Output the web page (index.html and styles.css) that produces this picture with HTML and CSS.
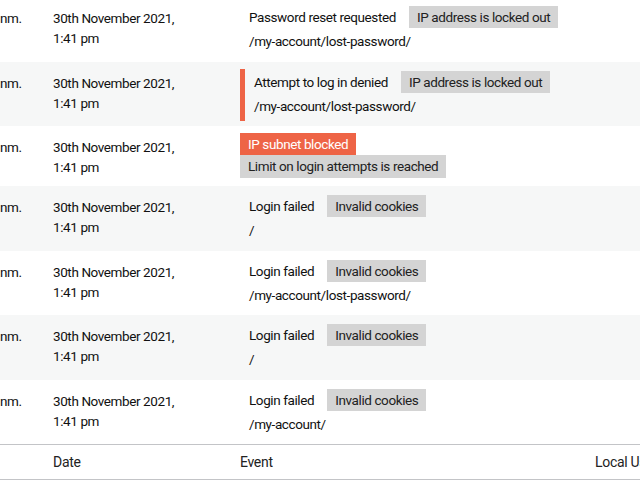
FILE: index.html
```html
<!DOCTYPE html>
<html>
<head>
<meta charset="utf-8">
<link rel="stylesheet" href="styles.css">
</head>
<body>
<div class="wrap">
<table class="log">
  <colgroup>
    <col class="c-user"><col class="c-date"><col class="c-event"><col class="c-local">
  </colgroup>
  <tbody>
    <tr>
      <td class="user">nm.</td>
      <td class="date">30th November 2021,<br>1:41 pm</td>
      <td class="event"><div class="ev"><div class="ev-line"><span class="label">Password reset requested</span><span class="tag">IP address is locked out</span></div><div class="path">/my-account/lost-password/</div></div></td>
      <td></td>
    </tr>
    <tr class="alt">
      <td class="user">nm.</td>
      <td class="date">30th November 2021,<br>1:41 pm</td>
      <td class="event"><div class="ev ev-alert"><div class="ev-line"><span class="label">Attempt to log in denied</span><span class="tag">IP address is locked out</span></div><div class="path">/my-account/lost-password/</div></div></td>
      <td></td>
    </tr>
    <tr>
      <td class="user">nm.</td>
      <td class="date">30th November 2021,<br>1:41 pm</td>
      <td class="event"><div class="tags"><span class="tag tag-red">IP subnet blocked</span><span class="tag">Limit on login attempts is reached</span></div></td>
      <td></td>
    </tr>
    <tr class="alt">
      <td class="user">nm.</td>
      <td class="date">30th November 2021,<br>1:41 pm</td>
      <td class="event"><div class="ev"><div class="ev-line"><span class="label">Login failed</span><span class="tag">Invalid cookies</span></div><div class="path">/</div></div></td>
      <td></td>
    </tr>
    <tr>
      <td class="user">nm.</td>
      <td class="date">30th November 2021,<br>1:41 pm</td>
      <td class="event"><div class="ev"><div class="ev-line"><span class="label">Login failed</span><span class="tag">Invalid cookies</span></div><div class="path">/my-account/lost-password/</div></div></td>
      <td></td>
    </tr>
    <tr class="alt">
      <td class="user">nm.</td>
      <td class="date">30th November 2021,<br>1:41 pm</td>
      <td class="event"><div class="ev"><div class="ev-line"><span class="label">Login failed</span><span class="tag">Invalid cookies</span></div><div class="path">/</div></div></td>
      <td></td>
    </tr>
    <tr>
      <td class="user">nm.</td>
      <td class="date">30th November 2021,<br>1:41 pm</td>
      <td class="event"><div class="ev"><div class="ev-line"><span class="label">Login failed</span><span class="tag">Invalid cookies</span></div><div class="path">/my-account/</div></div></td>
      <td></td>
    </tr>
  </tbody>
  <tfoot>
    <tr>
      <th class="user"></th>
      <th class="h-date">Date</th>
      <th class="h-event">Event</th>
      <th class="h-local">Local User</th>
    </tr>
  </tfoot>
</table>
</div>
</body>
</html>
```

FILE: styles.css
```css
html, body {
  margin: 0;
  padding: 0;
  background: #fff;
  overflow: hidden;
}
.wrap {
  width: 640px;
  height: 482px;
  overflow: hidden;
}
.log {
  margin-top: -3px;
  width: 820px;
  table-layout: fixed;
  border-collapse: collapse;
  font-family: Roboto, "Liberation Sans", sans-serif;
  font-size: 13.5px;
  letter-spacing: -0.4px;
  color: #111;
}
.c-user { width: 43px; }
.c-date { width: 187px; }
.c-event { width: 355px; }
.c-local { width: 235px; }

.log td {
  vertical-align: top;
  padding: 0;
}
.log tbody tr { background: #fff; }
.log tbody tr.alt { background: #f6f7f7; }

.log td.user {
  padding: 11px 10px 9px 0;
  line-height: 20px;
  white-space: nowrap;
}
.log td.date {
  padding: 11px 10px 9px 10px;
  line-height: 20px;
}
.log td.event {
  padding: 7px 10px 5.5px 10px;
}
.ev {
  padding: 1px 0 3px 9px;
}
.ev-alert {
  border-left: 5px solid #ee6446;
  padding-left: 9px;
}
.ev-line {
  height: 24px;
  display: flex;
  align-items: center;
  gap: 13px;
}
.label { line-height: 20px; }
.path {
  height: 24px;
  line-height: 24px;
}
.tag {
  display: inline-block;
  background: #d4d4d4;
  color: #222;
  padding: 0 8px;
  line-height: 22px;
  white-space: nowrap;
}
.tags {
  display: flex;
  flex-direction: column;
  align-items: flex-start;
}
.tags .tag-red {
  background: #ee6446;
  color: #fff;
}
.tags .tag:last-child { line-height: 23px; }

.log tfoot th {
  font-weight: normal;
  font-size: 14px;
  letter-spacing: -0.3px;
  text-align: left;
  color: #222;
  padding: 8px 10px;
  line-height: 18px;
  border-top: 1px solid #c3c4c7;
  border-bottom: 1px solid #c3c4c7;
  white-space: nowrap;
}
.log tfoot th.user { padding-left: 0; }
```
